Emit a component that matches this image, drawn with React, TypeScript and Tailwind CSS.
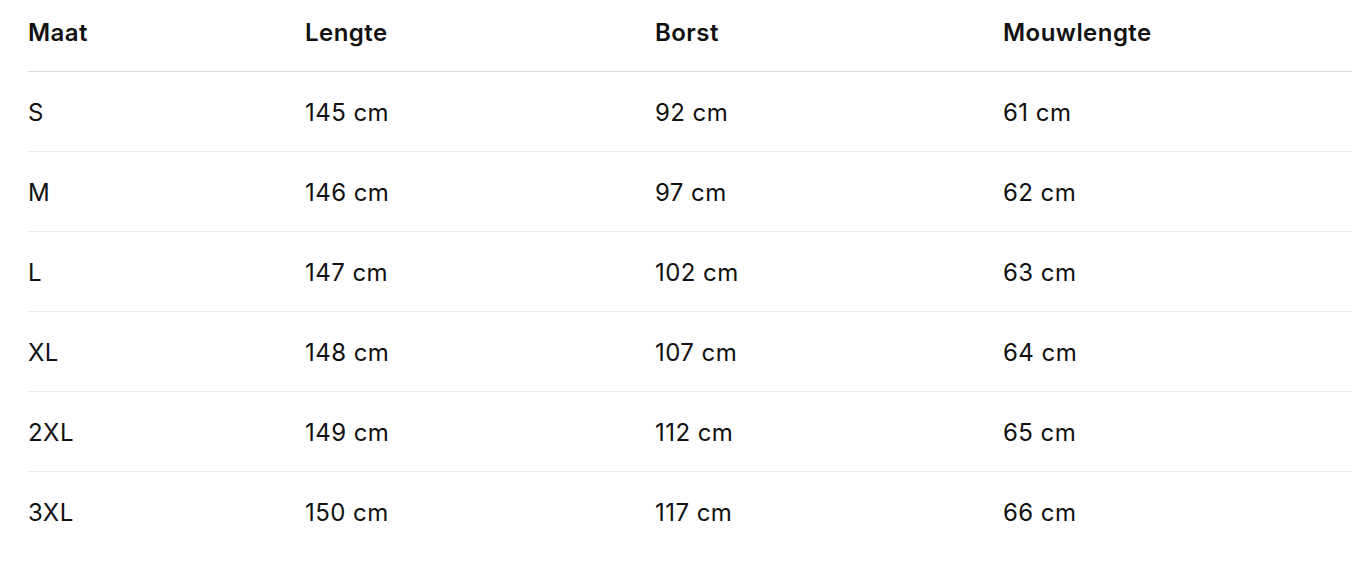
const rows = [
  { size: "S", length: "145 cm", chest: "92 cm", sleeve: "61 cm" },
  { size: "M", length: "146 cm", chest: "97 cm", sleeve: "62 cm" },
  { size: "L", length: "147 cm", chest: "102 cm", sleeve: "63 cm" },
  { size: "XL", length: "148 cm", chest: "107 cm", sleeve: "64 cm" },
  { size: "2XL", length: "149 cm", chest: "112 cm", sleeve: "65 cm" },
  { size: "3XL", length: "150 cm", chest: "117 cm", sleeve: "66 cm" },
];

const cols = "grid grid-cols-[277px_350px_348px_1fr]";

export default function App() {
  return (
    <div className="min-h-[566px] bg-white font-['Inter',sans-serif] text-[24px] tracking-[0.45px] text-[#111]">
      <div className="ml-[28px] w-[1324px]">
        {/* header */}
        <div className={`${cols} h-[72px] items-center border-b border-[#d9d9d9] pb-[6px] font-semibold`}>
          <div>Maat</div>
          <div>Lengte</div>
          <div>Borst</div>
          <div>Mouwlengte</div>
        </div>

        {rows.map((r, i) => (
          <div
            key={r.size}
            className={`${cols} h-[80px] items-center pt-[2px] ${
              i < rows.length - 1 ? "border-b border-[#ececec]" : ""
            }`}
          >
            <div>{r.size}</div>
            <div>{r.length}</div>
            <div>{r.chest}</div>
            <div>{r.sleeve}</div>
          </div>
        ))}
      </div>
    </div>
  );
}
